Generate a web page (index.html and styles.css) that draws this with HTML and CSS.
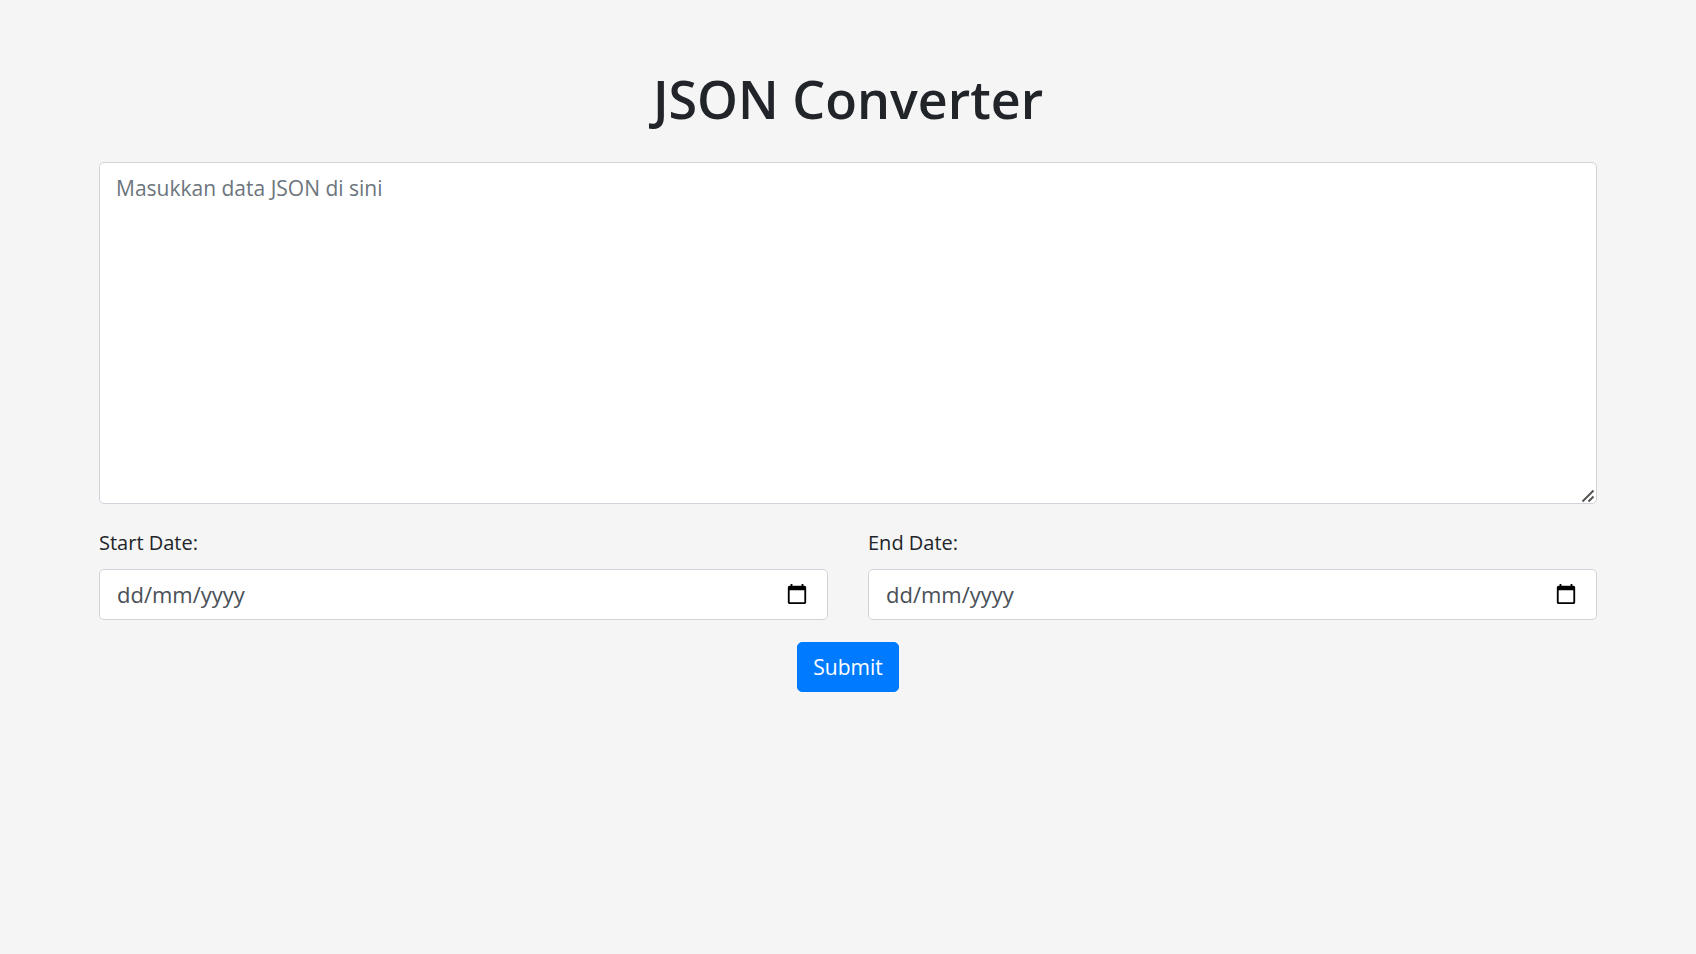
FILE: index.html
```html
<!DOCTYPE html>
<html lang="id">
<head>
  <meta charset="utf-8">
  <meta name="viewport" content="width=device-width, initial-scale=1">
  <title>JSON Converter</title>
  <link rel="stylesheet" href="styles.css">
</head>
<body>
  <main class="container">
    <h1 class="title">JSON Converter</h1>
    <form class="form">
      <div class="json-box">
        <textarea class="control json-input" rows="10" placeholder="Masukkan data JSON di sini" aria-label="Data JSON"></textarea>
        <svg class="grip" viewBox="0 0 14 14" aria-hidden="true"><path d="M1.500 12.500 12.500 1.500M7.500 12.500l5-5"/></svg>
      </div>
      <div class="dates">
        <div class="field">
          <label class="label" for="start-date">Start Date:</label>
          <div class="control date-box">
            <input class="date-input" id="start-date" type="text" placeholder="dd/mm/yyyy">
            <button class="picker" type="button" aria-label="Start date calendar">
              <svg class="icon" viewBox="0 0 24 24"><path d="M20 3h-1V1h-2v2H7V1H5v2H4c-1.1 0-2 .9-2 2v16c0 1.1.9 2 2 2h16c1.1 0 2-.9 2-2V5c0-1.1-.9-2-2-2zm0 18H4V8h16v13z"/></svg>
            </button>
          </div>
        </div>
        <div class="field">
          <label class="label" for="end-date">End Date:</label>
          <div class="control date-box">
            <input class="date-input" id="end-date" type="text" placeholder="dd/mm/yyyy">
            <button class="picker" type="button" aria-label="End date calendar">
              <svg class="icon" viewBox="0 0 24 24"><path d="M20 3h-1V1h-2v2H7V1H5v2H4c-1.1 0-2 .9-2 2v16c0 1.1.9 2 2 2h16c1.1 0 2-.9 2-2V5c0-1.1-.9-2-2-2zm0 18H4V8h16v13z"/></svg>
            </button>
          </div>
        </div>
      </div>
      <button class="submit" type="submit">Submit</button>
    </form>
  </main>
</body>
</html>
```
FILE: styles.css
```css
* {
  box-sizing: border-box;
}

body {
  margin: 0;
  background: #f5f5f5;
  color: #212529;
  font-family: "Segoe UI", "Open Sans", "Noto Sans", sans-serif;
  font-size: 21px;
  line-height: 32px;
}

.container {
  max-width: 1538px;
  margin: 0 auto;
  padding: 67px 20px;
}

.title {
  margin: 0 0 31px;
  font-size: 52px;
  font-weight: 600;
  line-height: 64px;
  text-align: center;
}

.form {
  display: flex;
  flex-direction: column;
}

.control {
  width: 100%;
  border: 1px solid #ced4da;
  border-radius: 5px;
  background: #fff;
  color: #495057;
  font: inherit;
}

.json-box {
  position: relative;
  margin-bottom: 23px;
}

.json-input {
  display: block;
  height: 342px;
  padding: 9px 16px;
  resize: vertical;
}

.json-input::-webkit-resizer {
  background: transparent;
}

.json-input::placeholder {
  color: #6c757d;
  opacity: 1;
}

.grip {
  position: absolute;
  right: 2px;
  bottom: 1px;
  width: 14px;
  height: 14px;
  fill: none;
  stroke: #555;
  stroke-width: 2;
  pointer-events: none;
}

.dates {
  display: grid;
  grid-template-columns: 1fr 1fr;
  gap: 40px;
  margin-bottom: 22px;
}

.label {
  display: block;
  margin-bottom: 10px;
  font-size: 20px;
}

.date-box {
  display: flex;
  align-items: center;
  padding: 8px 19px 9px 17px;
  font-size: 22px;
}

.date-input {
  flex: 1;
  min-width: 0;
  height: 32px;
  padding: 0;
  border: 0;
  outline: 0;
  background: none;
  color: inherit;
  font: inherit;
}

.date-input::placeholder {
  color: #495057;
  opacity: 1;
}

.picker {
  display: flex;
  padding: 0;
  border: 0;
  background: none;
  cursor: pointer;
}

.icon {
  width: 22px;
  height: 22px;
  fill: #000;
}

.submit {
  align-self: center;
  padding: 8px 15px;
  border: 1px solid #007bff;
  border-radius: 5px;
  background: #007bff;
  color: #fff;
  font: inherit;
  cursor: pointer;
}
```
